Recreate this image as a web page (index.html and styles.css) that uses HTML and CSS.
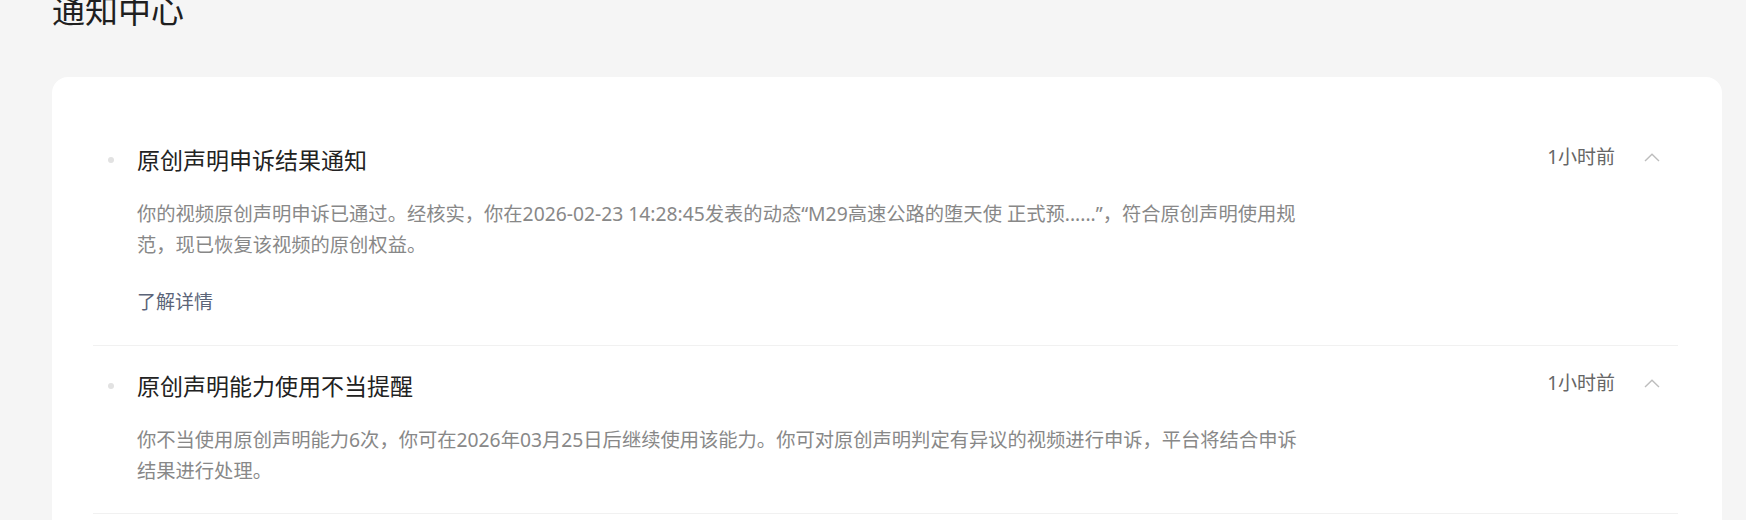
FILE: index.html
```html
<!DOCTYPE html>
<html lang="zh-CN">
<head>
<meta charset="utf-8">
<title>通知中心</title>
<link rel="stylesheet" href="styles.css">
</head>
<body>
<div class="page">
  <h1 class="page-title">通知中心</h1>
  <div class="card">
    <div class="item">
      <span class="dot"></span>
      <div class="main">
        <div class="head">
          <h3 class="title">原创声明申诉结果通知</h3>
          <div class="meta">
            <span class="time">1小时前</span>
            <svg class="chev" width="16" height="9" viewBox="0 0 16 9"><path d="M1 8 L8 1.2 L15 8" fill="none" stroke="#bdbdbd" stroke-width="1.4"/></svg>
          </div>
        </div>
        <p class="desc">你的视频原创声明申诉已通过。经核实，你在2026-02-23 14:28:45发表的动态“M29高速公路的堕天使 正式预......”，符合原创声明使用规范，现已恢复该视频的原创权益。</p>
        <a class="more">了解详情</a>
      </div>
    </div>
    <div class="item">
      <span class="dot"></span>
      <div class="main">
        <div class="head">
          <h3 class="title">原创声明能力使用不当提醒</h3>
          <div class="meta">
            <span class="time">1小时前</span>
            <svg class="chev" width="16" height="9" viewBox="0 0 16 9"><path d="M1 8 L8 1.2 L15 8" fill="none" stroke="#bdbdbd" stroke-width="1.4"/></svg>
          </div>
        </div>
        <p class="desc">你不当使用原创声明能力6次，你可在2026年03月25日后继续使用该能力。你可对原创声明判定有异议的视频进行申诉，平台将结合申诉结果进行处理。</p>
      </div>
    </div>
  </div>
</div>
</body>
</html>
```

FILE: styles.css
```css
html, body {
  margin: 0;
  padding: 0;
  background: #f5f5f5;
}
body {
  font-family: "Noto Sans", "Noto Sans CJK SC", sans-serif;
  color: #222;
}
.page {
  padding: 0 24px 0 52px;
}
.page-title {
  margin: -6px 0 0 0;
  font-size: 33px;
  line-height: 33px;
  font-weight: 400;
  color: #1f1f1f;
}
.card {
  margin-top: 50px;
  background: #fff;
  border-radius: 16px;
  padding: 43px 44px 60px 41px;
}
.item {
  display: flex;
  align-items: flex-start;
  padding: 24px 18px 27px 15px;
  border-bottom: 1px solid #f1f1f1;
}
.dot {
  flex: none;
  width: 6px;
  height: 6px;
  border-radius: 50%;
  background: #e2e2e2;
  margin-top: 13px;
  margin-right: 23px;
}
.main {
  flex: 1;
  min-width: 0;
}
.head {
  display: flex;
  align-items: center;
  justify-content: space-between;
}
.title {
  margin: 0;
  font-size: 23px;
  line-height: 32px;
  font-weight: 400;
  color: #222;
}
.meta {
  display: flex;
  align-items: center;
  gap: 29px;
  margin-top: -6px;
}
.time {
  font-size: 19px;
  line-height: 24px;
  color: #666;
}
.chev {
  display: block;
}
.desc {
  margin: 22px 0 0 0;
  width: 1162px;
  font-size: 19.3px;
  line-height: 31px;
  color: #888;
}
.more {
  display: block;
  margin-top: 27px;
  font-size: 19px;
  line-height: 31px;
  color: #5b6478;
  cursor: pointer;
}
```
